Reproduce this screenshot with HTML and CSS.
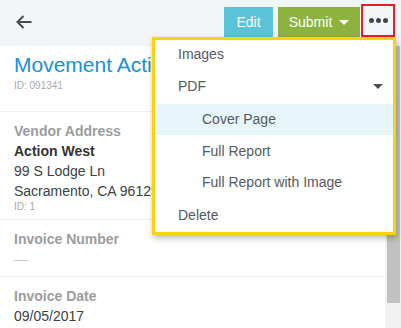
FILE: index.html
```html
<!DOCTYPE html>
<html>
<head>
<meta charset="utf-8">
<link rel="stylesheet" href="styles.css">
</head>
<body>
<div class="page">
  <header class="topbar">
    <div class="back">
      <svg width="16" height="14" viewBox="0 0 16 14"><path d="M15.5 7H1.5M7.5 1L1.5 7l6 6" fill="none" stroke="#454a50" stroke-width="2"/></svg>
    </div>
    <div class="actions">
      <button class="btn btn-edit">Edit</button>
      <button class="btn btn-submit">Submit <span class="caret-w"></span></button>
      <button class="more"><span class="dot"></span><span class="dot"></span><span class="dot"></span></button>
    </div>
  </header>
  <div class="body">
    <main class="content">
      <section class="titleblock">
        <h1 class="title">Movement Action</h1>
        <div class="small-id">ID: 091341</div>
      </section>
      <section class="field">
        <div class="label">Vendor Address</div>
        <div class="value strong">Action West</div>
        <div class="value">99 S Lodge Ln</div>
        <div class="value">Sacramento, CA 96125</div>
        <div class="small-id">ID: 1</div>
      </section>
      <section class="field">
        <div class="label">Invoice Number</div>
        <div class="value empty">—</div>
      </section>
      <section class="field">
        <div class="label">Invoice Date</div>
        <div class="value">09/05/2017</div>
      </section>
    </main>
    <div class="scrollbar"><div class="thumb"></div></div>
  </div>
  <nav class="menu">
    <div class="item i-images">Images</div>
    <div class="item i-pdf">PDF <span class="caret-d"></span></div>
    <div class="item sub active">Cover Page</div>
    <div class="item sub">Full Report</div>
    <div class="item sub">Full Report with Image</div>
    <div class="item i-delete">Delete</div>
  </nav>
</div>
</body>
</html>
```

FILE: styles.css
```css
* { box-sizing: border-box; }
html, body { margin: 0; padding: 0; }
body {
  font-family: "Liberation Sans", Arial, sans-serif;
  background: #fff;
  color: #333;
  width: 401px;
  height: 328px;
  overflow: hidden;
}
.page { position: relative; width: 401px; height: 328px; overflow: hidden; }

.topbar {
  height: 46px;
  background: #f3f6f9;
  display: flex;
  align-items: flex-start;
  justify-content: space-between;
  padding: 7px 6px 0 16px;
}
.back { height: 30px; display: flex; align-items: center; }
.back svg { display: block; }
.actions { display: flex; align-items: flex-start; }
.btn {
  border: 0;
  height: 30px;
  color: #fff;
  font-family: "Liberation Sans", Arial, sans-serif;
  font-size: 14px;
  padding: 0;
  display: flex;
  align-items: center;
  justify-content: center;
}
.btn-edit { background: #5ac3d8; width: 49px; margin-right: 5px; }
.btn-submit { background: #8bb33d; width: 82px; margin-right: 1px; }
.caret-w {
  display: inline-block;
  width: 0; height: 0;
  border-left: 5px solid transparent;
  border-right: 5px solid transparent;
  border-top: 5px solid #fff;
  margin-left: 7px;
  margin-top: 1px;
}
.more {
  margin-top: -3px;
  width: 34px;
  height: 33px;
  border: 2px solid #ee1c25;
  background: #f3f6f9;
  display: flex;
  align-items: center;
  justify-content: center;
  gap: 2px;
  padding: 0;
}
.dot { width: 5px; height: 5px; border-radius: 50%; background: #40444a; }

.body { display: flex; height: 282px; }
.content { flex: 1; min-width: 0; }
.scrollbar {
  width: 16px;
  background: #f1f1f1;
  padding: 0 1px 0 2px;
}
.thumb { height: 257px; background: #c1c1c1; }

.titleblock {
  padding: 7px 14px 20px;
  border-bottom: 1px solid #eef0f3;
}
.title {
  margin: 0;
  font-weight: normal;
  font-size: 21px;
  line-height: 24px;
  color: #1b8fd6;
  white-space: nowrap;
}
.small-id {
  margin-top: 3px;
  font-size: 10px;
  line-height: 11px;
  color: #a9a9a9;
}
.field .small-id { margin-top: 0; }
.field {
  padding: 9px 14px 7px;
  border-bottom: 1px solid #eef0f3;
}
.field:last-child { border-bottom: 0; }
.label { font-size: 14px; line-height: 20px; font-weight: bold; color: #9b9c9e; }
.value { font-size: 14px; line-height: 20px; color: #3c3f44; white-space: nowrap; }
.value.strong { font-weight: bold; color: #333; }
.value.empty { color: #c8c8c8; }

.menu {
  position: absolute;
  left: 152px;
  top: 37px;
  width: 244px;
  height: 198px;
  background: #fff;
  border: 3px solid #fad30f;
  box-shadow: 1px 3px 6px rgba(0,0,0,0.28);
  font-size: 14px;
  color: #555a60;
}
.item {
  display: flex;
  align-items: center;
  padding-left: 23px;
  padding-right: 10px;
  height: 31px;
}
.i-images { height: 27px; }
.i-pdf { height: 37px; justify-content: space-between; }
.sub { padding-left: 47px; }
.active { background: #e6f5fa; }
.sub.active { padding-bottom: 1px; }
.i-delete { height: 35px; }
.caret-d {
  width: 0; height: 0;
  border-left: 5px solid transparent;
  border-right: 5px solid transparent;
  border-top: 5px solid #4a4e54;
  margin-top: 2px;
}
```
